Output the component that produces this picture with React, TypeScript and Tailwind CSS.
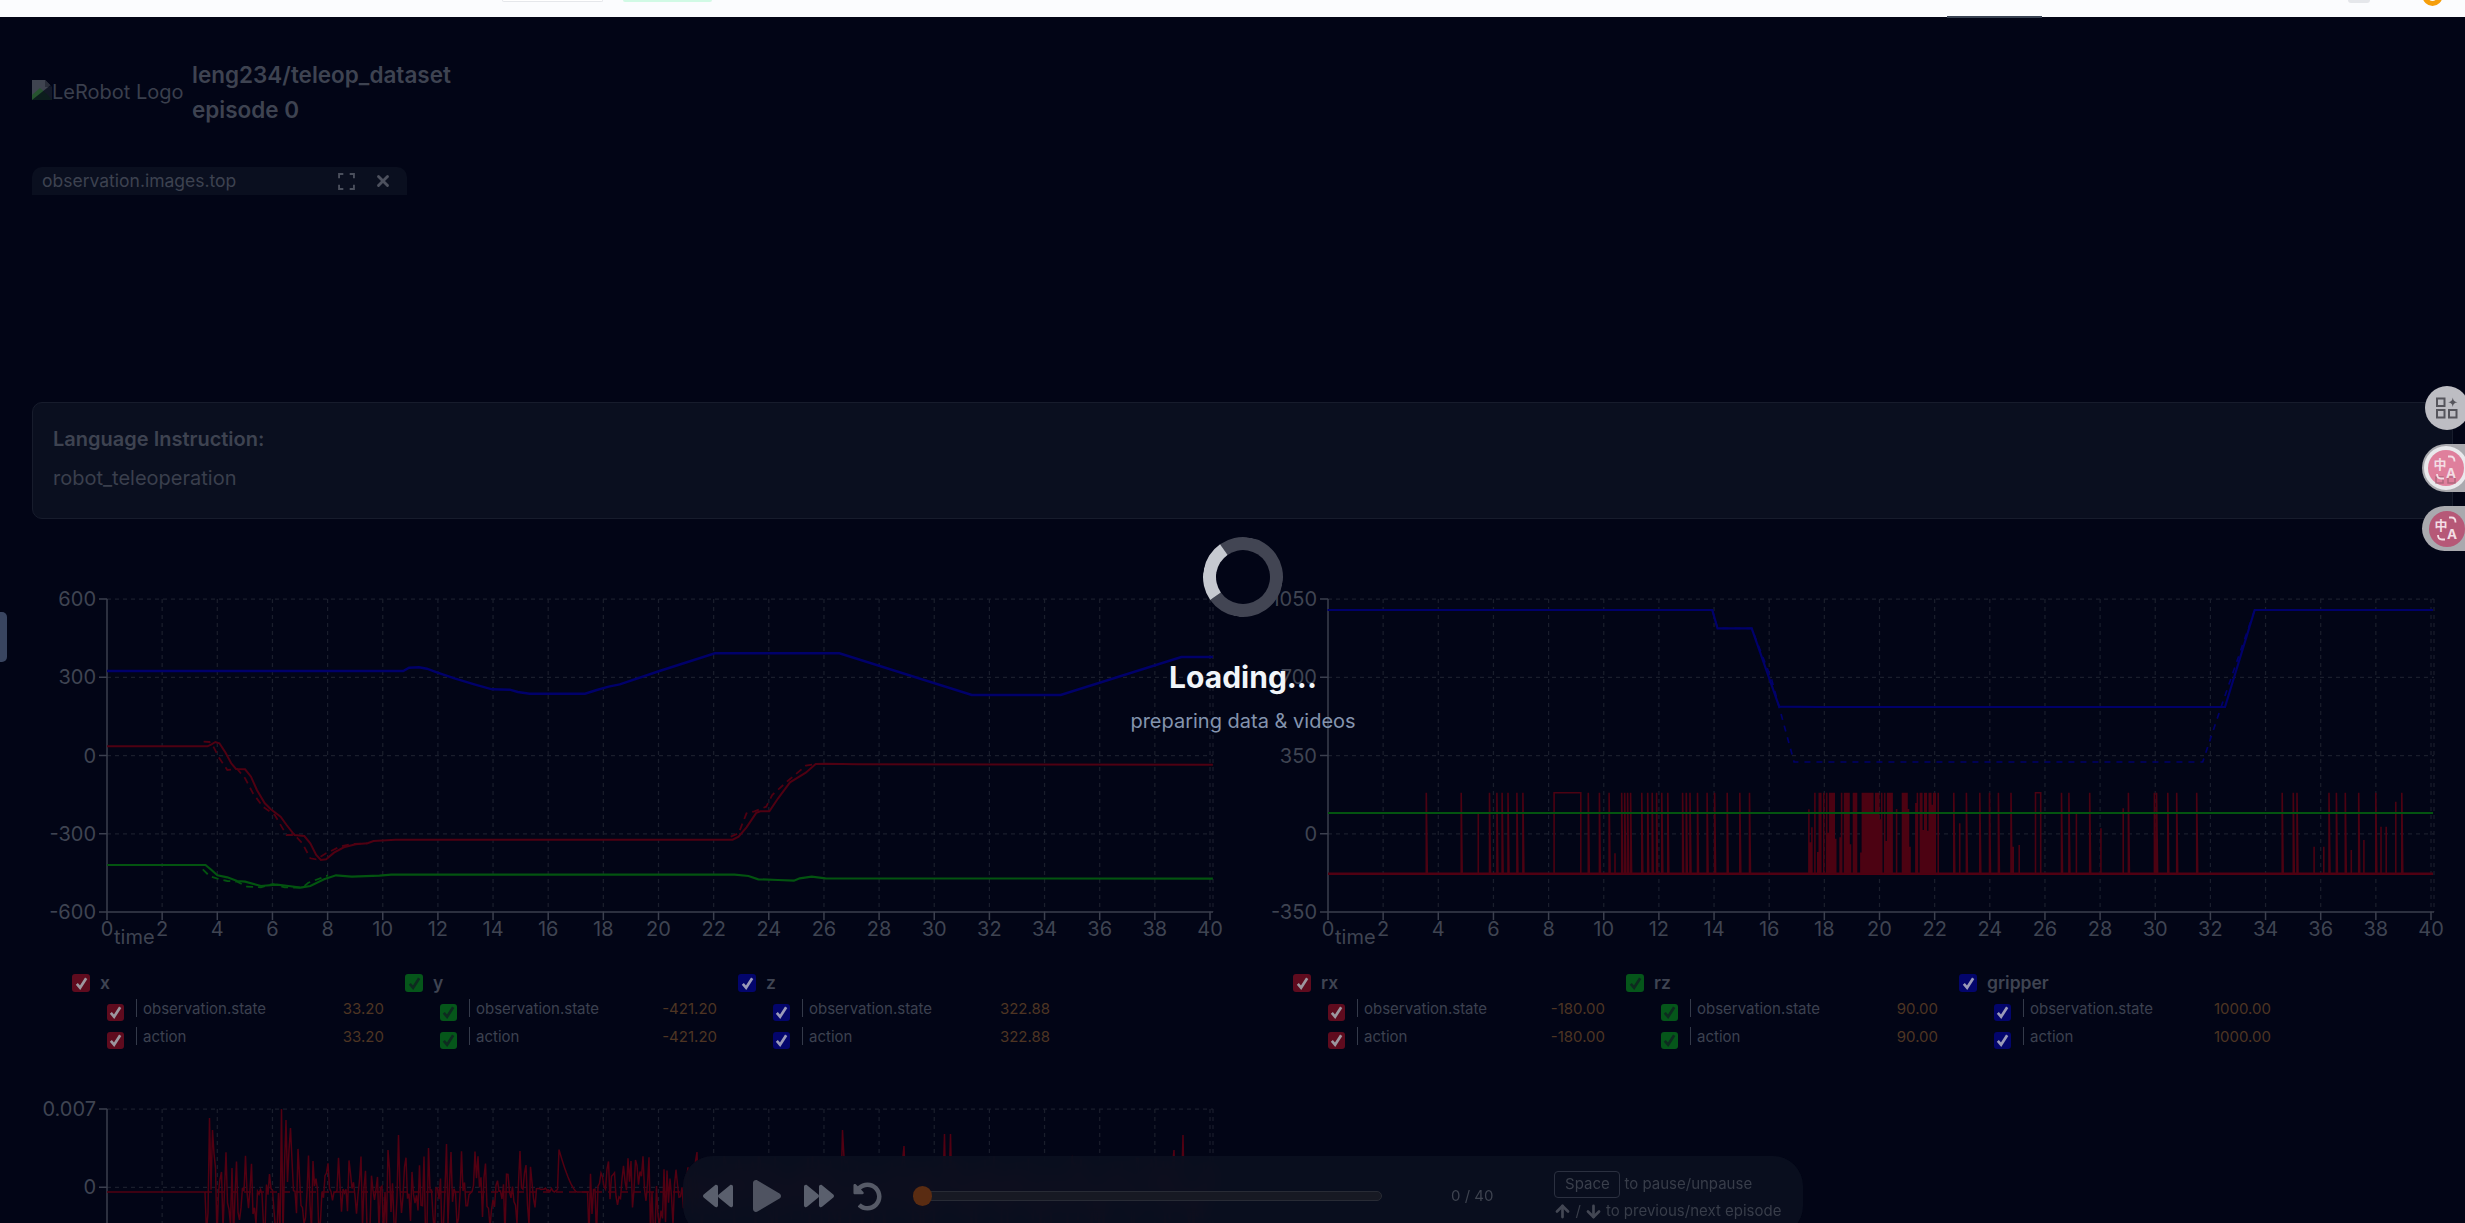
import React from "react";
import { FaBackward, FaPlay, FaForward, FaUndoAlt } from "react-icons/fa";
import { ArrowUp, ArrowDown, X } from "lucide-react";

type P = [number, number];
const z3 = (p: P[]) => p.map(([x, y]) => `${(x / 2.53 - 32).toFixed(1)},${(y / 3).toFixed(1)}`);
const z4 = (p: P[]) => p.map(([x, y]) => `${(620 + x / 2.53 - 32).toFixed(1)},${(y / 3).toFixed(1)}`);
const z10 = (p: P[]) => p.map(([x, y]) => `${(47 + x / 1.346).toFixed(1)},${(-10 + y / 3).toFixed(1)}`);

const RED = "#4f0012";
const GREEN = "#035410";
const BLUE = "#00006a";
const GRID = "#1a1e2c";
const AXIS = "#3b3f4e";
const TICK = "#3f4452";

const redSolid = [
  ...z3([[271,469],[525,469],[535,463],[545,456],[555,460],[570,487],[585,520],[597,537],[620,538],[635,560],[650,600],[670,640],[685,658],[710,680],[725,705],[745,735],[770,738],[785,760],[800,795],[812,810],[825,808],[845,788],[870,772],[900,763],[930,760],[945,753],[1000,749]]),
  ...z4([[285,749],[300,740],[320,712],[345,668],[355,664],[378,664],[400,625],[430,577],[470,548],[495,522],[520,521],[600,523],[1500,524]]),
].join(" ");
const redDash = [
  ...z3([[515,455],[530,456],[540,470],[555,505],[575,540],[600,537],[620,565],[640,610],[665,650],[695,675],[725,735],[745,735],[765,760],[785,805],[800,808],[825,790],[860,770],[890,762],[930,760]]),
].join(" ");
const redDash2 = z4([[280,740],[300,730],[320,670],[340,664],[370,650],[385,615],[425,572],[470,527],[495,522]]).join(" ");
const greenSolid = [
  ...z3([[271,825],[520,825],[535,840],[550,856],[575,862],[600,873],[620,875],[660,888],[700,884],[730,888],[760,893],[785,888],[820,868],[850,856],[890,860],[960,857],[990,854]]),
  ...z4([[290,854],[325,858],[350,868],[400,870],[440,872],[455,865],[485,860],[520,865],[1500,866]]),
].join(" ");
const greenDash = z3([[513,838],[530,858],[550,866],[575,873],[600,875],[625,890],[660,892],[690,882],[720,892],[765,893],[780,878],[830,856]]).join(" ");
const blueSolid = [
  ...z3([[271,243],[1020,243],[1035,233],[1060,232],[1080,236],[1105,247],[1150,265],[1200,283],[1245,298],[1290,299],[1310,306],[1340,311],[1480,311],[1510,300],[1540,290],[1568,283]]),
  ...z4([[100,243],[240,190],[555,190],[890,315],[1115,315],[1420,201],[1500,201]]),
].join(" ");

const blue2 = z10([[37,90],[555,90],[562,145],[608,145],[645,380],[700,381],[1245,381],[1285,90],[1525,90]]).join(" ");
const blue2Dash = z10([[555,90],[562,145],[608,145],[635,300],[665,546],[1215,546],[1240,380],[1285,90]]).join(" ");

function rng(seed: number) {
  let s = seed;
  return () => (s = (s * 16807) % 2147483647) / 2147483647;
}

const gripper = (() => {
  const r = rng(4242);
  const X = (z: number) => 47 + z / 1.346;
  const base = -10 + 881 / 3;
  const top = -10 + 638 / 3;
  const tall = [170,217,255,265,272,280,292,300,388,403,416,433,437,441,445,460,468,474,480,487,495,515,520,525,535,548,558,575,592,605,880,897,915,928,940,957,1025,1035,1063,1115,1150,1153,1168,1180,1207,1322,1337,1342,1385,1395,1407,1425,1448,1483];
  const short: P[] = [[240,700],[1045,700],[1078,745],[1108,685],[1365,800],[1378,800],[1415,810],[1432,780],[1455,740],[1462,740],[1475,665],[888,730],[960,800],[968,795],[424,820],[255,735]];
  let d = "";
  tall.forEach((z) => {
    const x = X(z).toFixed(1);
    d += `M${x} ${base.toFixed(1)} V${top.toFixed(1)} L${(X(z) + 1).toFixed(1)} ${base.toFixed(1)} `;
  });
  short.forEach(([z, y]) => {
    d += `M${X(z).toFixed(1)} ${base.toFixed(1)} V${(-10 + y / 3).toFixed(1)} `;
  });
  d += `M${X(342).toFixed(1)} ${base.toFixed(1)} V${top.toFixed(1)} H${X(378).toFixed(1)} V${base.toFixed(1)} `;
  d += `M${X(990).toFixed(1)} ${base.toFixed(1)} V${top.toFixed(1)} H${X(997).toFixed(1)} V${base.toFixed(1)} `;
  for (let z = 685; z < 860; z += 2) {
    const dense = z < 795 ? 0.88 : 0.72;
    if (r() < dense) {
      const h = r() < 0.68 ? top : top + r() * 60;
      d += `M${X(z).toFixed(1)} ${base.toFixed(1)} V${h.toFixed(1)} `;
    }
  }
  return d;
})();

const noise = (() => {
  const r = rng(917);
  const pts: string[] = [];
  const base = 92;
  pts.push(`75,${base}`, `172,${base}`);
  const peaks: P[] = [[178,18],[181,30],[250,9],[254,20],[258,28],[367,35],[396,48],[414,44],[603,60],[810,30],[810,34],[913,34],[919,34],[872,46],[1151,35],[1142,50],[665,52],[681,62]];
  for (let x = 173; x <= 1181; x += 1.5) {
    let y: number;
    const peak = peaks.find(([px]) => Math.abs(px - x) < 0.8);
    if (peak) y = peak[1];
    else if (x > 505 && x < 526) y = base - r() * 4;
    else if (x >= 526 && x < 545) y = 92 - 46 * Math.pow(1 - (x - 526) / 19, 1.5);
    else if (x >= 545 && x < 557) y = 92;
    else {
      const a = r();
      const up = r() < 0.55;
      const span = x < 500 ? 44 : 36;
      y = up ? base - Math.pow(a, 1.5) * span : base + Math.pow(a, 1.3) * 46;
    }
    pts.push(`${x.toFixed(1)},${y.toFixed(1)}`);
  }
  return pts.join(" ");
})();

const xs = Array.from({ length: 21 }, (_, i) => i * 2);
const xOf = (t: number) => 75 + t * 27.575;

function Chart({ yLabels, children }: { yLabels: string[]; children: React.ReactNode }) {
  const ys = [9, 87.25, 165.5, 243.75, 322];
  return (
    <svg width="1200" height="360" className="block overflow-visible">
      {ys.map((y, i) =>
        i < 4 ? <line key={y} x1="75" x2="1181" y1={y} y2={y} stroke={GRID} strokeWidth="1.25" strokeDasharray="4 4" /> : null
      )}
      {xs.slice(1).map((t) => (
        <line key={t} x1={xOf(t)} x2={xOf(t)} y1="9" y2="322" stroke={GRID} strokeWidth="1.25" strokeDasharray="4 4" />
      ))}
      <line x1="1181" x2="1181" y1="9" y2="322" stroke={GRID} strokeWidth="1.25" strokeDasharray="4 4" />
      <line x1="75" x2="75" y1="9" y2="322" stroke={AXIS} strokeWidth="1.5" />
      <line x1="75" x2="1181" y1="322" y2="322" stroke={AXIS} strokeWidth="1.5" />
      {ys.map((y, i) => (
        <g key={y}>
          <line x1="67" x2="75" y1={y} y2={y} stroke={AXIS} strokeWidth="1.5" />
          <text x="64" y={y + 7} textAnchor="end" fontSize="20" fill={TICK} fontFamily="Inter, sans-serif">{yLabels[i]}</text>
        </g>
      ))}
      {xs.map((t) => (
        <g key={t}>
          <line x1={xOf(t)} x2={xOf(t)} y1="322" y2="330" stroke={AXIS} strokeWidth="1.5" />
          <text x={xOf(t)} y="346" textAnchor="middle" fontSize="20" fill={TICK} fontFamily="Inter, sans-serif">{t}</text>
        </g>
      ))}
      <text x="82" y="354" fontSize="20" fill={TICK} fontFamily="Inter, sans-serif">time</text>
      {children}
    </svg>
  );
}

function Check({ color, tick, big }: { color: string; tick: string; big?: boolean }) {
  return (
    <span
      className={big ? "flex h-[18px] w-[18px] shrink-0 items-center justify-center rounded-[3px]" : "flex h-[17px] w-[17px] shrink-0 items-center justify-center rounded-[3px]"}
      style={{ backgroundColor: color }}
    >
      <svg viewBox="0 0 16 16" width="15" height="15" fill="none" stroke={tick} strokeWidth="2.9">
        <path d="M3 8.5 6.5 12.5 13 2.5" />
      </svg>
    </span>
  );
}

const palette: Record<string, { bg: string; tick: string }> = {
  red: { bg: "#5f0b1e", tick: "#9c979f" },
  green: { bg: "#05561a", tick: "#0e2a20" },
  blue: { bg: "#03056c", tick: "#9a9ab8" },
};

function LegendCol({ name, tone, value }: { name: string; tone: string; value: string }) {
  const c = palette[tone];
  return (
    <div className="w-[333px] shrink-0">
      <div className="flex h-[18px] items-center gap-[10px]">
        <Check color={c.bg} tick={c.tick} big />
        <span className="text-[17.5px] font-semibold leading-[18px] text-[#3f4452]">{name}</span>
      </div>
      <div className="mt-[7px] ml-[35px] w-[277px]">
        {["observation.state", "action"].map((label) => (
          <div key={label} className="flex h-[28px] items-start">
            <span className="mt-[5px]"><Check color={c.bg} tick={c.tick} /></span>
            <span className="ml-[12px] h-[18px] w-px bg-[#343a4a]" />
            <span className="ml-[6px] text-[15px] leading-[20px] text-[#3c4150]">{label}</span>
            <span className="ml-auto text-[15px] leading-[20px] text-[#4e3523]">{value}</span>
          </div>
        ))}
      </div>
    </div>
  );
}

function SparkGrid() {
  return (
    <svg viewBox="0 0 24 24" width="24" height="24" fill="none" stroke="#55555c" strokeWidth="2">
      <rect x="2" y="2.500" width="7.500" height="7.500" />
      <rect x="2" y="14" width="7.500" height="7.500" />
      <rect x="14" y="14" width="7.500" height="7.500" />
      <path d="M17.800 1.500c.5 3 1.500 4.300 4.700 4.700-3.200.5-4.200 1.700-4.700 4.800-.5-3.100-1.500-4.300-4.700-4.800 3.200-.4 4.200-1.700 4.700-4.700Z" fill="#55555c" stroke="none" />
    </svg>
  );
}

function Translate({ fill, ghost }: { fill: string; ghost?: boolean }) {
  return (
    <svg viewBox="0 0 36 36" width="36" height="36">
      <circle cx="18" cy="18" r="18" fill={fill} />
      {ghost ? (
        <g fill="none" stroke="#8a5566" strokeWidth="1.5" opacity="0.55">
          <rect x="8" y="27" width="7" height="6" />
          <rect x="20" y="27" width="7" height="6" />
        </g>
      ) : null}
      <text x="5.500" y="19" fontSize="13" fontWeight="700" fill="#f3dde4" fontFamily="'Noto Sans CJK SC', sans-serif">中</text>
      <text x="18" y="28" fontSize="13.500" fontWeight="700" fill="#f3dde4" fontFamily="Inter, sans-serif">A</text>
      <path d="M20 6.500h2.500c2.500 0 4 1.500 4 5M16 28.500h-3c-2.500 0-4-1.500-4-4.500" fill="none" stroke="#f3dde4" strokeWidth="1.800" />
    </svg>
  );
}

export default function App() {
  return (
    <div className="relative h-[1223px] w-full overflow-hidden bg-[#020516] font-['Inter',sans-serif]">
      {/* top white strip */}
      <div className="relative flex h-[17px] items-start bg-[#fbfcfe]">
        <div className="ml-[502px] h-[2px] w-[101px] rounded-b border border-t-0 border-[#e5e7eb] bg-white" />
        <div className="ml-[20px] h-[2px] w-[89px] rounded-b bg-[#d1fae5]" />
        <div className="ml-auto mr-[50px] h-[3px] w-[22px] rounded-b bg-[#e5e7eb]" />
        <svg width="25" height="6" viewBox="0 0 25 6" className="mr-[20px]">
          <circle cx="12.500" cy="-4" r="10" fill="#f59e0b" />
          <circle cx="12.500" cy="-4" r="5" fill="#fbfcfe" />
        </svg>
        <div className="absolute bottom-[-1px] left-[1947px] h-[2px] w-[95px] bg-[#374151]" />
      </div>

      <main className="pl-[32px] pr-[12px] pt-[40px]">
        {/* header */}
        <header className="flex h-[70px] items-center">
          <div className="flex w-[160px] items-end text-[20px] leading-[24px] text-[#3a3f4d]">
            <svg width="20" height="20" viewBox="0 0 20 20" className="mb-[4px] shrink-0">
              <path d="M0 0h13l7 7v13H0Z" fill="#3f4450" />
              <path d="M0 20v-5l8-7 8 7 4 5Z" fill="#26542f" />
              <path d="M13 0v7h7Z" fill="#2b2f3b" />
              <path d="M0 20 20 4v16Z" fill="#020516" opacity="0.7" />
            </svg>
            <span className="whitespace-nowrap">LeRobot Logo</span>
          </div>
          <div className="text-[22.5px] font-semibold leading-[35px] text-[#3e4351]">
            <p>leng234/teleop_dataset</p>
            <p>episode 0</p>
          </div>
        </header>

        {/* video tile */}
        <section className="mt-[40px] h-[235px]">
          <div className="flex h-[28px] w-[375px] items-center rounded-t-[10px] bg-[#0a0f1f] pl-[10px] pr-[15px] text-[17.5px] text-[#3d4250]">
            <span>observation.images.top</span>
            <svg className="ml-auto" width="17" height="17" viewBox="0 0 16 16" fill="none" stroke="#4a4f5c" strokeWidth="1.8">
              <path d="M1 5V1h4M11 1h4v4M15 11v4h-4M5 15H1v-4" />
            </svg>
            <X className="ml-[19px]" size={18} strokeWidth={3.8} color="#4d515e" />
          </div>
        </section>

        {/* language card */}
        <section className="h-[117px] rounded-[10px] border border-[#171c2c] bg-[#0a0f1f] pl-[20px] pt-[24px]">
          <p className="text-[20px] font-semibold leading-[24px] text-[#3e4351]">Language Instruction:</p>
          <p className="mt-[15px] text-[20px] leading-[24px] text-[#3a3f4d]">robot_teleoperation</p>
        </section>

        {/* charts */}
        <section className="mt-[71px] grid grid-cols-2 gap-x-[21px]">
          <div>
            <Chart yLabels={["600", "300", "0", "-300", "-600"]}>
              <polyline points={blueSolid} fill="none" stroke={BLUE} strokeWidth="2.4" />
              <polyline points={redSolid} fill="none" stroke={RED} strokeWidth="2" />
              <polyline points={redDash} fill="none" stroke={RED} strokeWidth="1.8" strokeDasharray="7 5" />
              <polyline points={redDash2} fill="none" stroke={RED} strokeWidth="1.8" strokeDasharray="7 5" />
              <polyline points={greenSolid} fill="none" stroke={GREEN} strokeWidth="2.2" />
              <polyline points={greenDash} fill="none" stroke={GREEN} strokeWidth="1.8" strokeDasharray="7 5" />
            </Chart>
            <div className="ml-[40px] mt-[24px] flex">
              <LegendCol name="x" tone="red" value="33.20" />
              <LegendCol name="y" tone="green" value="-421.20" />
              <LegendCol name="z" tone="blue" value="322.88" />
            </div>
          </div>
          <div>
            <Chart yLabels={["1050", "700", "350", "0", "-350"]}>
              <line x1="75" x2="1180" y1="283.7" y2="283.7" stroke="#500012" strokeWidth="2.4" />
              <path d={gripper} fill="none" stroke="#4c0212" strokeWidth="1.6" />
              <line x1="75" x2="1180" y1="223" y2="223" stroke={GREEN} strokeWidth="2.2" />
              <polyline points={blue2Dash} fill="none" stroke={BLUE} strokeWidth="1.7" strokeDasharray="6 6" />
              <polyline points={blue2} fill="none" stroke={BLUE} strokeWidth="2.2" />
            </Chart>
            <div className="ml-[40px] mt-[24px] flex">
              <LegendCol name="rx" tone="red" value="-180.00" />
              <LegendCol name="rz" tone="green" value="90.00" />
              <LegendCol name="gripper" tone="blue" value="1000.00" />
            </div>
          </div>
        </section>

        {/* third chart */}
        <svg width="1200" height="123" className="mt-[45px] block overflow-visible">
          <line x1="75" x2="1181" y1="9" y2="9" stroke={GRID} strokeWidth="1.25" strokeDasharray="4 4" />
          <line x1="75" x2="1181" y1="87.250" y2="87.250" stroke={GRID} strokeWidth="1.25" strokeDasharray="4 4" />
          {xs.slice(1).map((t) => (
            <line key={t} x1={xOf(t)} x2={xOf(t)} y1="9" y2="123" stroke={GRID} strokeWidth="1.25" strokeDasharray="4 4" />
          ))}
          <line x1="1181" x2="1181" y1="9" y2="123" stroke={GRID} strokeWidth="1.25" strokeDasharray="4 4" />
          <line x1="75" x2="75" y1="9" y2="123" stroke={AXIS} strokeWidth="1.5" />
          <line x1="67" x2="75" y1="9" y2="9" stroke={AXIS} strokeWidth="1.5" />
          <line x1="67" x2="75" y1="87.250" y2="87.250" stroke={AXIS} strokeWidth="1.5" />
          <text x="64" y="16" textAnchor="end" fontSize="20" fill={TICK} fontFamily="Inter, sans-serif">0.007</text>
          <text x="64" y="94" textAnchor="end" fontSize="20" fill={TICK} fontFamily="Inter, sans-serif">0</text>
          <polyline points={noise} fill="none" stroke="#520012" strokeWidth="1.5" />
          <line x1="173" x2="1181" y1="92" y2="92" stroke="#520012" strokeWidth="1.4" strokeDasharray="7 6" />
        </svg>
      </main>

      {/* sidebar handle */}
      <div className="absolute left-0 top-[612px] h-[50px] w-[7px] rounded-r-[5px] bg-[#394560]" />

      {/* floating playback bar */}
      <div className="absolute left-[683px] top-[1156px] flex h-[80px] w-[1120px] items-center rounded-[30px] bg-[#0a0f1f]/90 pl-[20px] backdrop-blur-sm">
        <FaBackward size={30} color="#5a5f6d" />
        <FaPlay size={32} color="#4f5361" className="ml-[18px]" />
        <FaForward size={30} color="#5a5f6d" className="ml-[21px]" />
        <FaUndoAlt size={29} color="#565a67" className="ml-[19px]" />
        <div className="relative ml-[31px] flex h-[20px] w-[469px] items-center">
          <div className="ml-[10px] h-[10px] flex-1 rounded-r-full border border-[#282b35] bg-[#171923]" />
          <div className="absolute left-0 top-0 h-[20px] w-[19px] rounded-full bg-[#5a2c12]" />
        </div>
        <span className="ml-[69px] text-[15px] text-[#3e4350]">0 / 40</span>
        <div className="ml-[61px] flex flex-col text-[15px] text-[#383d4a]">
          <div className="flex h-[27px] items-center">
            <span className="flex h-[27px] w-[66px] items-center justify-center rounded-[4px] border border-[#2b3040] text-[#3a3f4c]">Space</span>
            <span className="ml-[4px]">to pause/unpause</span>
          </div>
          <div className="mt-[3px] flex h-[20px] items-center">
            <ArrowUp size={19} strokeWidth={3.4} color="#434754" className="-ml-[1px]" />
            <span className="mx-[3px]">/</span>
            <ArrowDown size={19} strokeWidth={3.4} color="#434754" />
            <span className="ml-[3px]">to previous/next episode</span>
          </div>
        </div>
      </div>

      {/* loading */}
      <div className="absolute left-[1043px] top-[537px] flex w-[400px] flex-col items-center">
        <div className="h-[80px] w-[80px] rotate-[10deg] rounded-full border-[13px] border-[#424553] border-l-[#c6c9d0]" />
        <p className="mt-[42px] text-[30px] font-bold leading-[36px] text-[#f1f5f9]">Loading...</p>
        <p className="mt-[12px] text-[20px] leading-[28px] text-[#8494ae]">preparing data &amp; videos</p>
      </div>

      {/* right floating buttons */}
      <div className="absolute left-[2425px] top-[386px] flex h-[44px] w-[44px] items-center justify-center rounded-full bg-[#bdbdc3]">
        <SparkGrid />
      </div>
      <div className="absolute left-[2422px] top-[444px] flex h-[48px] w-[48px] items-center justify-center rounded-l-full bg-[#a9a9ae]">
        <div className="flex h-[44px] w-[44px] items-center justify-center rounded-full bg-[#e9e9ec]">
          <Translate fill="#df7f9c" ghost />
        </div>
      </div>
      <div className="absolute left-[2422px] top-[506px] flex h-[45px] w-[48px] items-center rounded-l-full bg-[#a9a9ae] pl-[7px]">
        <Translate fill="#b65877" />
      </div>
    </div>
  );
}
